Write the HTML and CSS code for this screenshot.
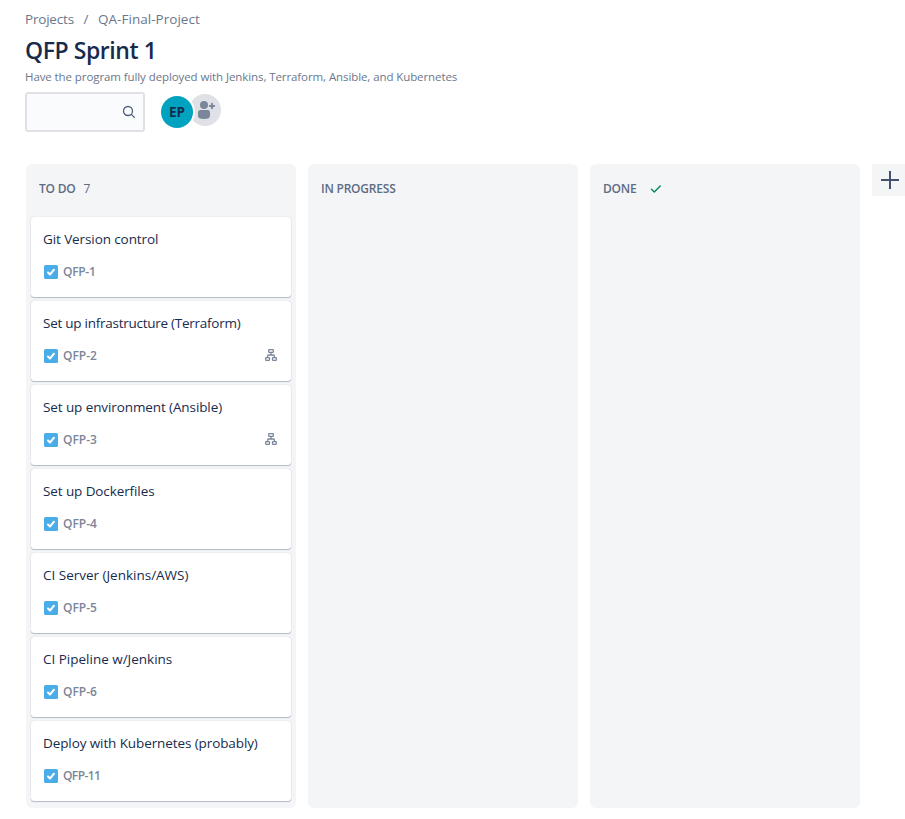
FILE: index.html
```html
<!DOCTYPE html>
<html lang="en">
<head>
<meta charset="utf-8">
<title>QFP Sprint 1</title>
<link rel="stylesheet" href="styles.css">
</head>
<body>
<svg class="defs" width="0" height="0" aria-hidden="true">
  <symbol id="task" viewBox="0 0 14 14"><rect width="14" height="14" rx="1.5" fill="#4bade8"/><path d="M4 7.500l2 2 4-4.800" fill="none" stroke="#fff" stroke-width="2" stroke-linecap="round" stroke-linejoin="round"/></symbol>
  <symbol id="subtasks" viewBox="0 0 12 12"><g fill="none" stroke="#7a869a" stroke-width="1.3"><rect x="3.700" y=".7" width="4.600" height="2.600" rx=".6"/><rect x=".7" y="8.700" width="3.800" height="2.600" rx=".6"/><rect x="7.500" y="8.700" width="3.800" height="2.600" rx=".6"/><path d="M6 3.500v2.500M2.600 8.500V7q0-1 1-1h4.800q1 0 1 1v1.500"/></g></symbol>
</svg>
<main class="page">
  <nav class="crumbs"><a class="crumb-root">Projects</a><span class="slash">/</span><a class="crumb-project">QA-Final-Project</a></nav>
  <h1 class="title">QFP Sprint 1</h1>
  <p class="goal">Have the program fully deployed with Jenkins, Terraform, Ansible, and Kubernetes</p>
  <div class="toolbar">
    <div class="search"><svg width="14" height="14" viewBox="0 0 14 14" fill="none" stroke="#505f79" stroke-width="1.3" stroke-linecap="round"><circle cx="6" cy="6" r="4.5"/><path d="M9.4 9.4l3 3"/></svg></div>
    <div class="people">
      <span class="avatar">EP</span>
      <span class="add-person"><svg width="32" height="32" viewBox="0 0 32 32" fill="#7a869a"><circle cx="15" cy="11" r="4"/><path d="M9 18.500a2.500 2.500 0 0 1 2.500-2.500h7a2.500 2.500 0 0 1 2.500 2.500v3.200q0 3.300-6 3.300t-6-3.300z"/><path d="M23 9.800v4.400M20.800 12h4.400" stroke="#7a869a" stroke-width="1.900" stroke-linecap="round"/></svg></span>
    </div>
  </div>
  <div class="board">
    <section class="column">
      <h2 class="head"><span>TO DO</span><span class="count">7</span></h2>
      <div class="cards">
        <article class="card"><p class="name">Git Version control</p><div class="meta"><svg class="task"><use href="#task"/></svg><span class="key narrow">QFP-1</span></div></article>
        <article class="card"><p class="name tight">Set up infrastructure (Terraform)</p><div class="meta"><svg class="task"><use href="#task"/></svg><span class="key">QFP-2</span><svg class="sub"><use href="#subtasks"/></svg></div></article>
        <article class="card"><p class="name">Set up environment (Ansible)</p><div class="meta"><svg class="task"><use href="#task"/></svg><span class="key">QFP-3</span><svg class="sub"><use href="#subtasks"/></svg></div></article>
        <article class="card"><p class="name">Set up Dockerfiles</p><div class="meta"><svg class="task"><use href="#task"/></svg><span class="key">QFP-4</span></div></article>
        <article class="card"><p class="name wide">CI Server (Jenkins/AWS)</p><div class="meta"><svg class="task"><use href="#task"/></svg><span class="key">QFP-5</span></div></article>
        <article class="card"><p class="name wide">CI Pipeline w/Jenkins</p><div class="meta"><svg class="task"><use href="#task"/></svg><span class="key">QFP-6</span></div></article>
        <article class="card"><p class="name">Deploy with Kubernetes (probably)</p><div class="meta"><svg class="task"><use href="#task"/></svg><span class="key narrower">QFP-11</span></div></article>
      </div>
    </section>
    <section class="column"><h2 class="head"><span>IN PROGRESS</span></h2></section>
    <section class="column"><h2 class="head"><span>DONE</span><svg class="tick" width="12" height="10" viewBox="0 0 12 10"><path d="M1.500 5.300l2.800 2.700 5.900-6" fill="none" stroke="#00875a" stroke-width="1.400" stroke-linecap="round" stroke-linejoin="round"/></svg></h2></section>
    <button class="add-column" aria-label="Add column"><svg width="18" height="18" viewBox="0 0 18 18"><path d="M9 0v18M0 9h18" stroke="#42526e" stroke-width="2"/></svg></button>
  </div>
</main>
</body>
</html>
```
FILE: styles.css
```css
* { box-sizing: border-box; }
body { margin: 0; background: #fff; color: #172b4d; font-family: "Open Sans", "Noto Sans", sans-serif; overflow: hidden; }
.defs { display: none; }
h1, h2, p { margin: 0; font-weight: 400; }
svg { display: block; flex: none; }
.page { width: 905px; height: 819px; padding: 9px 0 0 25px; overflow: hidden; white-space: nowrap; }
.crumbs { display: flex; height: 20px; line-height: 20px; font-size: 13.5px; color: #6b778c; }
.crumb-root { width: 49px; letter-spacing: -.2px; }
.slash { width: 24px; text-align: center; }
.crumb-project { letter-spacing: .03px; }
.title { height: 28px; margin-top: 7px; font-size: 23px; line-height: 28px; font-weight: 600; letter-spacing: -.43px; }
.goal { height: 16px; margin-top: 5px; font-size: 11.5px; line-height: 16px; color: #6b778c; letter-spacing: -.09px; }
.toolbar { display: flex; height: 40px; margin-top: 7px; }
.search { display: flex; align-items: center; justify-content: flex-end; width: 120px; height: 40px; padding-right: 7px; border: 2px solid #dfe1e6; border-radius: 3px; background: #fafbfc; }
.people { display: flex; margin-left: 16px; }
.avatar, .add-person { width: 32px; height: 32px; border-radius: 50%; }
.avatar { z-index: 1; margin-top: 4px; background: #00a3bf; box-shadow: 0 0 0 2px #fff; font-size: 13.5px; font-weight: 700; line-height: 32px; text-align: center; }
.add-person { margin: 2px 0 0 -4px; background: #dfe1e6; }
.board { display: flex; align-items: flex-start; gap: 12px; height: 644px; margin: 32px 0 0 1px; }
.column { flex: none; width: 270px; height: 644px; padding: 0 4px; border-radius: 6px; background: #f4f5f7; }
.head { display: flex; align-items: center; height: 53px; padding: 0 9px 4px; font-size: 12px; font-weight: 600; letter-spacing: -.22px; color: #5e6c84; }
.count { margin-left: 8px; font-weight: 400; }
.tick { margin-left: 14px; }
.cards { display: flex; flex-direction: column; gap: 4px; padding: 0 1px; }
.card { height: 80px; padding: 12px 14px 0 12px; border-radius: 3px; background: #fff; box-shadow: 0 1px 1px rgba(9, 30, 66, .25), 0 0 1px rgba(9, 30, 66, .25); }
.name { height: 20px; font-size: 13.5px; line-height: 20px; letter-spacing: -.1px; }
.tight { letter-spacing: -.26px; }
.wide { letter-spacing: -.01px; }
.meta { display: flex; align-items: center; height: 20px; margin-top: 13px; }
.task { width: 14px; height: 14px; margin-left: 1px; }
.key { margin-left: 5px; font-size: 12px; line-height: 20px; font-weight: 600; color: #7a869a; }
.narrow { letter-spacing: -.3px; }
.narrower { letter-spacing: -.6px; }
.sub { width: 12px; height: 12px; margin: 0 0 2px auto; }
.add-column { display: flex; align-items: center; justify-content: center; flex: none; width: 36px; height: 32px; padding: 0; border: 0; border-radius: 3px; background: #f4f5f7; }
```
